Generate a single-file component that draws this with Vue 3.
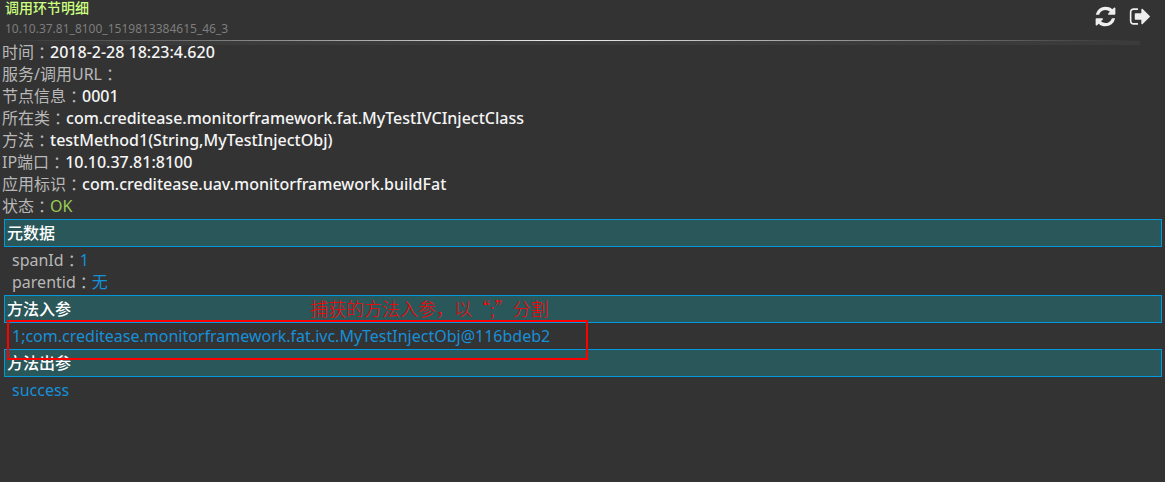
<script setup>
const details = [
  { label: '时间', value: '2018-2-28 18:23:4.620' },
  { label: '服务/调用URL', value: '' },
  { label: '节点信息', value: '0001' },
  { label: '所在类', value: 'com.creditease.monitorframework.fat.MyTestIVCInjectClass' },
  { label: '方法', value: 'testMethod1(String,MyTestInjectObj)' },
  { label: 'IP端口', value: '10.10.37.81:8100' },
  { label: '应用标识', value: 'com.creditease.uav.monitorframework.buildFat' },
  { label: '状态', value: 'OK', ok: true },
]
const meta = [
  { label: 'spanId', value: '1' },
  { label: 'parentid', value: '无' },
]
</script>

<template>
  <main class="page">
    <header class="head">
      <div class="titles">
        <h1 class="title">调用环节明细</h1>
        <p class="trace">10.10.37.81_8100_1519813384615_46_3</p>
      </div>
      <div class="actions">
        <button type="button" class="icon" aria-label="刷新">
          <svg viewBox="0 0 1792 1792" aria-hidden="true"><path d="M1639 1056q0 5-1 7-64 268-268 434.5t-478 166.5q-146 0-282.5-55t-243.5-157l-129 129q-19 19-45 19t-45-19-19-45v-448q0-26 19-45t45-19h448q26 0 45 19t19 45-19 45l-137 137q71 66 161 102t187 36q134 0 250-65t186-179q11-17 53-117 8-23 30-23h192q13 0 22.5 9.5t9.5 22.5zm25-800v448q0 26-19 45t-45 19h-448q-26 0-45-19t-19-45 19-45l138-138q-148-137-349-137-134 0-250 65t-186 179q-11 17-53 117-8 23-30 23h-199q-13 0-22.5-9.5t-9.5-22.5v-7q65-268 270-434.5t480-166.5q146 0 284 55.5t245 156.5l130-129q19-19 45-19t45 19 19 45z" /></svg>
        </button>
        <button type="button" class="icon" aria-label="退出">
          <svg viewBox="0 0 1792 1792" aria-hidden="true"><path d="M704 1440q0 4 1 20t.5 26.5-3 23.5-10 19.5-20.5 6.5h-320q-119 0-203.5-84.5t-84.5-203.5v-704q0-119 84.5-203.5t203.5-84.5h320q13 0 22.5 9.5t9.5 22.5q0 4 1 20t.5 26.5-3 23.5-10 19.5-20.5 6.5h-320q-66 0-113 47t-47 113v704q0 66 47 113t113 47h312l11.5 1 11.5 3 8 5.5 7 9 2 13.5zm928-544q0 26-19 45l-544 544q-19 19-45 19t-45-19-19-45v-288h-448q-26 0-45-19t-19-45v-384q0-26 19-45t45-19h448v-288q0-26 19-45t45-19 45 19l544 544q19 19 19 45z" /></svg>
        </button>
      </div>
    </header>
    <div class="rule"></div>

    <dl class="details">
      <div v-for="row in details" :key="row.label" class="row">
        <dt>{{ row.label }}<span class="colon">：</span></dt>
        <dd :class="row.ok ? 'ok' : 'strong'">{{ row.value }}</dd>
      </div>
    </dl>

    <section>
      <h2 class="bar">元数据</h2>
      <dl class="body">
        <div v-for="row in meta" :key="row.label" class="row">
          <dt>{{ row.label }}<span class="colon">：</span></dt>
          <dd>{{ row.value }}</dd>
        </div>
      </dl>
    </section>
    <section class="params">
      <h2 class="bar">方法入参</h2>
      <p class="body">1;com.creditease.monitorframework.fat.ivc.MyTestInjectObj@116bdeb2</p>
      <span class="note">捕获的方法入参，以“;”分割</span>
      <span class="frame"></span>
    </section>
    <section>
      <h2 class="bar">方法出参</h2>
      <p class="body">success</p>
    </section>
  </main>
</template>

<style>
html, body { background: #333; }
body { margin: 0; }
</style>

<style scoped>
.page {
  min-height: 100vh;
  box-sizing: border-box;
  background: #333;
  color: #b8b8b8;
  font: 16px/22px "Noto Sans", "Noto Sans CJK SC", sans-serif;
}
h1, h2, p, dl, dd { margin: 0; }
.head {
  display: flex;
  justify-content: space-between;
  height: 40px;
  padding: 0 13px 0 5px;
  box-sizing: border-box;
}
.title {
  font: 500 14px/14px "Noto Sans CJK SC", sans-serif;
  color: #ccff80;
}
.trace {
  margin-top: 6px;
  font-size: 12px;
  line-height: 18px;
  color: #7d7d7d;
}
.actions { display: flex; gap: 12px; padding-top: 5px; }
.icon {
  width: 23px;
  height: 23px;
  padding: 0;
  border: 0;
  background: none;
  cursor: pointer;
}
.icon svg { display: block; width: 23px; height: 23px; fill: #eee; }
.rule {
  height: 5px;
  margin-right: 25px;
  background:
    linear-gradient(to right, #333, #eee 50%, #333) top / 100% 1px no-repeat,
    linear-gradient(to right, #333, #3b3b3b 10%, #3b3b3b);
}
.details { margin-top: -4px; padding: 0 2px; }
.row { display: flex; height: 22px; white-space: nowrap; }
.colon {
  font-family: "Noto Sans CJK TC", sans-serif;
  line-height: 16px;
  vertical-align: -1px;
}
.strong { color: #f5f5f5; font-weight: 500; }
.ok { color: #99cc55; }
.bar {
  margin: 2px 3px 0 4px;
  padding: 0 2px 2px;
  border: 1px solid #0099dd;
  background: #2a5759;
  color: #fff;
  font: 500 16px/24px "Noto Sans CJK SC", sans-serif;
}
.body { padding: 2px 12px 0; }
.body dd, p.body { color: #1690d8; }
.params { position: relative; }
.note {
  position: absolute;
  left: 310px;
  top: 1px;
  font: 300 18px/24px "Noto Sans CJK SC", sans-serif;
  color: #f00;
  white-space: nowrap;
}
.frame {
  position: absolute;
  left: 7px;
  top: 25px;
  width: 581px;
  height: 40px;
  box-sizing: border-box;
  border: 2px solid #f00;
  z-index: 1;
}
</style>
